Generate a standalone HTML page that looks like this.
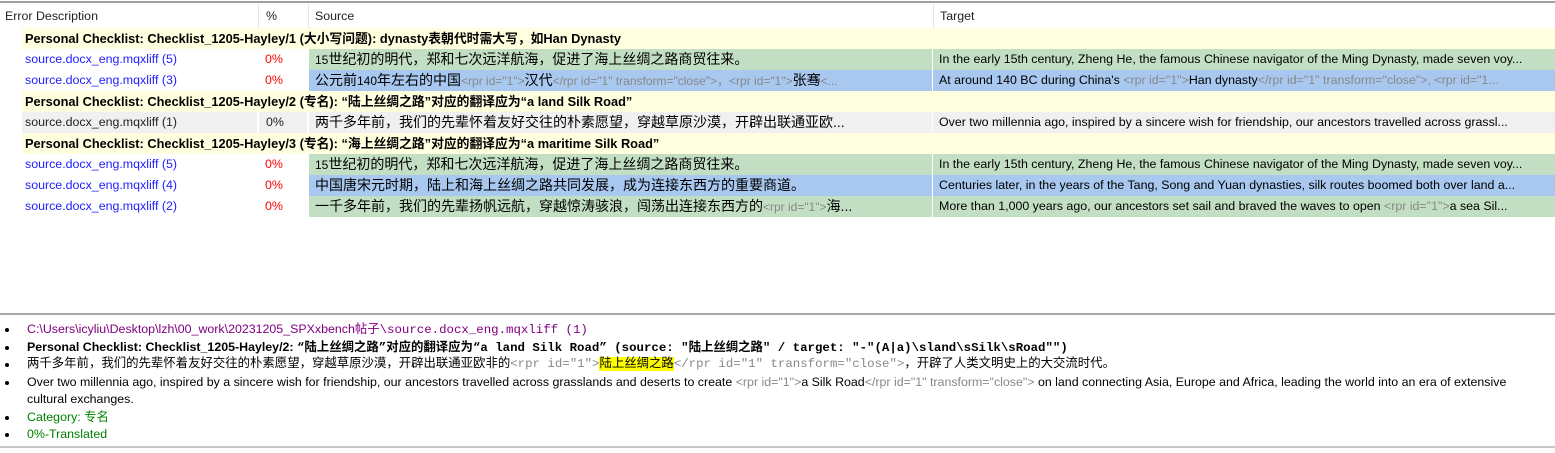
<!DOCTYPE html>
<html><head><meta charset="utf-8"><style>
*{margin:0;padding:0;box-sizing:border-box}
body{width:1555px;height:453px;background:#fff;font-family:"Liberation Sans","Noto Sans CJK SC",sans-serif;font-size:12.4px;color:#000;position:relative;overflow:hidden}
.topline{position:absolute;left:0;top:1px;width:1555px;height:2px;background:#a0a0a0}
.hdr{position:absolute;top:4px;height:24px;line-height:24px;padding-left:5px;color:#222}
.sep{position:absolute;top:4px;height:24px;width:1px;background:#e5e5e5}
.row{position:absolute;left:0;width:1555px;height:21px;line-height:21px;white-space:nowrap}
.grp{position:absolute;left:22px;right:0;height:21px;background:#ffffe0;font-weight:bold;padding-left:3px;font-size:12.8px}
.c{position:absolute;top:0;height:21px;overflow:hidden;white-space:nowrap}
.ed{left:22px;width:236px;padding-left:3px;color:#2020ff}
.pc{left:258px;width:50px;padding-left:7px;color:#ff0000}
.src{left:309px;width:623px;padding-left:6px;font-size:14px}
.tgt{left:933px;width:622px;padding-left:6px}
.g{background:#c3dfc3}.b{background:#a8c8ef}.gr{background:#f0f0f0}
.t{color:#888}
.panel{position:absolute;left:0;top:313px;width:1555px;height:135px;border-top:2px solid #a8a8a8;border-bottom:2px solid #c8c8c8}
.li{position:absolute;left:27px;white-space:nowrap;line-height:17px}
.bul{position:absolute;left:5px;width:4px;height:4px;background:#000;border-radius:2px}
.mono{font-family:"Liberation Mono","Noto Sans CJK SC",monospace}
</style></head><body>
<div class="topline"></div>
<div class="hdr" style="left:0">Error Description</div>
<div class="sep" style="left:258px"></div>
<div class="hdr" style="left:261px">%</div>
<div class="sep" style="left:308px"></div>
<div class="hdr" style="left:310px">Source</div>
<div class="sep" style="left:933px"></div>
<div class="hdr" style="left:935px">Target</div>

<div class="row" style="top:28px"><div class="grp">Personal Checklist: Checklist_1205-Hayley/1 (大小写问题): dynasty表朝代时需大写，如Han Dynasty</div></div>
<div class="row" style="top:49px"><div class="c ed">source.docx_eng.mqxliff (5)</div><div class="c pc">0%</div><div class="c src g"><span style="font-size:12px">15</span>世纪初的明代，郑和七次远洋航海，促进了海上丝绸之路商贸往来。</div><div class="c tgt g">In the early 15th century, Zheng He, the famous Chinese navigator of the Ming Dynasty, made seven voy...</div></div>
<div class="row" style="top:70px"><div class="c ed">source.docx_eng.mqxliff (3)</div><div class="c pc">0%</div><div class="c src b">公元前<span style="font-size:12px">140</span>年左右的中国<span class="t" style="font-size:12px">&lt;rpr id="1"&gt;</span>汉代<span class="t" style="font-size:12px">&lt;/rpr id="1" transform="close"&gt;，&lt;rpr id="1"&gt;</span>张骞<span class="t" style="font-size:12px">&lt;...</span></div><div class="c tgt b">At around 140 BC during China's <span class="t">&lt;rpr id="1"&gt;</span>Han dynasty<span class="t">&lt;/rpr id="1" transform="close"&gt;, &lt;rpr id="1...</span></div></div>
<div class="row" style="top:91px"><div class="grp">Personal Checklist: Checklist_1205-Hayley/2 (专名): “陆上丝绸之路”对应的翻译应为“a land Silk Road”</div></div>
<div class="row" style="top:112px"><div class="c ed gr" style="color:#222;width:235px">source.docx_eng.mqxliff (1)</div><div class="c pc gr" style="color:#222;left:259px;width:48px">0%</div><div class="c src gr">两千多年前，我们的先辈怀着友好交往的朴素愿望，穿越草原沙漠，开辟出联通亚欧...</div><div class="c tgt gr">Over two millennia ago, inspired by a sincere wish for friendship, our ancestors travelled across grassl...</div></div>
<div class="row" style="top:133px"><div class="grp">Personal Checklist: Checklist_1205-Hayley/3 (专名): “海上丝绸之路”对应的翻译应为“a maritime Silk Road”</div></div>
<div class="row" style="top:154px"><div class="c ed">source.docx_eng.mqxliff (5)</div><div class="c pc">0%</div><div class="c src g"><span style="font-size:12px">15</span>世纪初的明代，郑和七次远洋航海，促进了海上丝绸之路商贸往来。</div><div class="c tgt g">In the early 15th century, Zheng He, the famous Chinese navigator of the Ming Dynasty, made seven voy...</div></div>
<div class="row" style="top:175px"><div class="c ed">source.docx_eng.mqxliff (4)</div><div class="c pc">0%</div><div class="c src b">中国唐宋元时期，陆上和海上丝绸之路共同发展，成为连接东西方的重要商道。</div><div class="c tgt b">Centuries later, in the years of the Tang, Song and Yuan dynasties, silk routes boomed both over land a...</div></div>
<div class="row" style="top:196px"><div class="c ed">source.docx_eng.mqxliff (2)</div><div class="c pc">0%</div><div class="c src g">一千多年前，我们的先辈扬帆远航，穿越惊涛骇浪，闯荡出连接东西方的<span class="t" style="font-size:12px">&lt;rpr id="1"&gt;</span>海...</div><div class="c tgt g">More than 1,000 years ago, our ancestors set sail and braved the waves to open <span class="t">&lt;rpr id="1"&gt;</span>a sea Sil...</div></div>

<div class="panel"></div>
<div class="bul" style="top:328px"></div><div class="li" style="top:321px;color:#800080">C:\Users\icyliu\Desktop\lzh\00_work\20231205_SPXxbench帖子<span class="mono">\source.docx_eng.mqxliff (1)</span></div>
<div class="bul" style="top:346px"></div><div class="li" style="top:339px;font-weight:bold">Personal Checklist: Checklist_1205-Hayley/2: <span class="mono">“陆上丝绸之路”对应的翻译应为“a land Silk Road” (source: ″陆上丝绸之路″ / target: ″-″(A|a)\sland\sSilk\sRoad″″)</span></div>
<div class="bul" style="top:363px"></div><div class="li mono" style="top:356px">两千多年前，我们的先辈怀着友好交往的朴素愿望，穿越草原沙漠，开辟出联通亚欧非的<span class="t">&lt;rpr id="1"&gt;</span><span style="background:#ffff00">陆上丝绸之路</span><span class="t">&lt;/rpr id="1" transform="close"&gt;</span>，开辟了人类文明史上的大交流时代。</div>
<div class="bul" style="top:381px"></div><div class="li" style="top:374px;white-space:normal;width:1500px">Over two millennia ago, inspired by a sincere wish for friendship, our ancestors travelled across grasslands and deserts to create <span class="t">&lt;rpr id="1"&gt;</span>a Silk Road<span class="t">&lt;/rpr id="1" transform="close"&gt;</span> on land connecting Asia, Europe and Africa, leading the world into an era of extensive cultural exchanges.</div>
<div class="bul" style="top:416px"></div><div class="li" style="top:409px;color:#008000">Category: 专名</div>
<div class="bul" style="top:433px"></div><div class="li" style="top:426px;color:#008000">0%-Translated</div>
</body></html>
